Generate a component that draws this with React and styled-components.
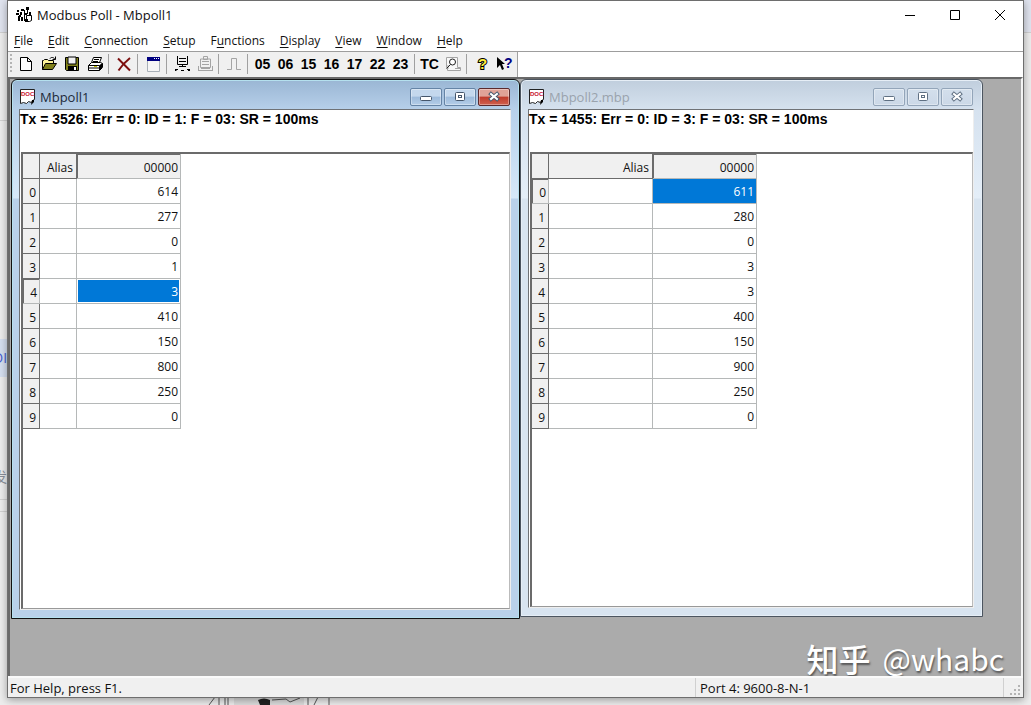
import React from 'react';
import styled, { createGlobalStyle } from 'styled-components';

const GlobalStyle = createGlobalStyle`
* { box-sizing: border-box; }
body {
    margin: 0;
    background: #ededed;
    font-family: "Open Sans", "Noto Sans", "Noto Sans CJK SC", sans-serif;
    font-size: 12px;
    color: #111;
}
button { font: inherit; color: inherit; padding: 0; }
`;

const Desktop = styled.div`
height: 100vh;
padding: 0 7px 7px;
position: relative;
overflow: hidden;
background: linear-gradient(#e0e4ef 0 32px, #d0d0d0 32px 33px, #ededed 33px);
`;

const Snippet = styled.span`
position: absolute;
left: ${p => p.$left}px;
top: ${p => p.$top}px;
padding: 8px 0;
font-size: 14px;
line-height: 22px;
white-space: nowrap;
color: ${p => p.$color};
background: ${p => p.$background || 'none'};
`;

const Rule = styled.span`
position: absolute;
left: 0;
width: 8px;
top: ${p => p.$top}px;
height: 1px;
background: #d2d2d2;
`;

const Sketch = styled.svg`
position: absolute;
left: 200px;
bottom: 0;
`;

const AppWindow = styled.main`
position: relative;
height: 100%;
display: flex;
flex-direction: column;
background: #fff;
border: 1px solid #6e6e6e;
box-shadow: 0 2px 8px rgba(0, 0, 0, 0.35);
`;

const TitleBar = styled.header`
display: flex;
align-items: center;
height: 29px;
padding: 0 1px 1px 8px;
flex: none;
`;

const TitleText = styled.h1`
margin: 0 auto 0 5px;
font-size: 13px;
font-weight: 400;
`;

const CaptionButton = styled.button`
width: 45px;
height: 28px;
border: 0;
background: none;
display: grid;
place-items: center;
`;

const MenuBar = styled.nav`
display: flex;
height: 21px;
flex: none;
align-items: center;
gap: 15px;
padding-left: 6px;
`;

const MenuButton = styled.button`
border: 0;
background: none;
white-space: nowrap;
u { text-underline-offset: 2px; }
`;

const ToolRow = styled.div`
height: 26px;
flex: none;
border-top: 1px solid #9d9d9d;
display: flex;
`;

const Toolbar = styled.div`
display: flex;
align-items: center;
background: #f0f0f0;
border-right: 1px solid #a0a0a0;
padding: 0 1px 1px 2px;
height: 25px;
`;

const Grip = styled.span`
width: 2px;
height: 20px;
background: repeating-linear-gradient(#b4b4b4 0 2px, #f0f0f0 2px 4px);
margin-right: 2px;
`;

const ToolButton = styled.button`
width: 23px;
height: 22px;
border: 0;
background: none;
display: grid;
place-items: center;
font-family: "Liberation Sans", Arial, sans-serif;
font-weight: 700;
font-size: 14px;
color: #000;
`;

const Separator = styled.span`
width: 1px;
height: 20px;
margin: 0 3px 0 2px;
background: #a0a0a0;
`;

const Workspace = styled.section`
position: relative;
flex: 1;
min-height: 0;
background: #ababab;
border: solid #696969;
border-width: 2px 0 0 2px;
border-right: 2px solid #f4f4f4;
overflow: hidden;
`;

const Child = styled.article`
position: absolute;
left: ${p => p.$left}px;
top: 0;
width: ${p => p.$width}px;
height: ${p => p.$height}px;
display: flex;
flex-direction: column;
padding: 0 8px 8px 7px;
border: 1px solid ${p => (p.$active ? '#111' : '#4c5560')};
border-radius: 6px 6px 0 0;
background: ${p => (p.$active
        ? 'linear-gradient(#9ab6d4, #b7d0ea 30px, #d6e8f8 118px, #b9d1ea 119px)'
        : 'linear-gradient(#c0cedd, #d6e2ef 30px, #e4eef8 118px, #d8e4f0 119px)')};
box-shadow: inset 0 0 0 1px ${p => (p.$active ? '#b5e0ee' : '#e6eef6')};
`;

const ChildTitle = styled.header`
display: flex;
align-items: center;
height: 29px;
flex: none;
gap: 2px;
padding: 5px 1px 0 0;
`;

const ChildName = styled.h2`
margin: 0 auto 0 3px;
font-size: 13px;
font-weight: 400;
color: ${p => (p.$active ? '#1d2a3a' : '#9aa3ad')};
`;

const FrameButton = styled.button`
width: 32px;
height: 18px;
display: grid;
place-items: center;
border: 1px solid ${p => (p.$danger ? '#5b2a2d' : p.$active ? '#6584a6' : '#93a5b9')};
border-radius: 2px;
background: ${p => (p.$danger
        ? 'linear-gradient(#e0a297 0 45%, #bf3a2b 50%, #d0614f)'
        : p.$active
            ? 'linear-gradient(#c4d8ed 0 45%, #9dbbdb 50%, #b4cde8)'
            : 'linear-gradient(#d3dfec, #cbd8e7)')};
box-shadow: inset 0 0 0 1px rgba(255, 255, 255, 0.35);
`;

const Client = styled.div`
flex: 1;
min-height: 0;
display: flex;
flex-direction: column;
background: #fff;
border: 1px solid #6f7276;
border-right-color: #eee;
border-bottom-color: #eee;
`;

const StatusLine = styled.p`
margin: 0;
height: 42px;
flex: none;
font: 700 14px/18px "Liberation Sans", Arial, sans-serif;
color: #000;
white-space: nowrap;
`;

const Sheet = styled.div`
flex: 1;
margin-left: 1px;
border: 2px solid #6b6b6b;
border-right: 1px solid #bbb;
border-bottom: 1px solid #999;
`;

const Grid = styled.table`
border-collapse: separate;
border-spacing: 0;
table-layout: fixed;
width: ${p => 17 + p.$alias + 104}px;
td {
    height: 25px;
    padding: 0 2px 0 0;
    text-align: right;
    border: solid #b5b8b8;
    border-width: 0 1px 1px 0;
}
`;

const AliasCol = styled.col`
width: ${p => p.$width}px;
`;

const IndexCol = styled.col`
width: 17px;
`;

const HeadCell = styled.th`
height: 25px;
padding: 2px 3px 0 0;
font-weight: 400;
text-align: right;
background: #f0f0f0;
border: solid #6b6b6b;
border-width: 0 1px 1px 0;
${p => p.$pressed && `
padding-right: 2px;
border-color: #b5b8b8;
box-shadow: inset 1px 1px #6b6b6b;
`}
`;

const ValueCell = styled.td`
background: ${p => (p.$selected ? '#0078d7' : '#fff')};
color: ${p => (p.$selected ? '#fff' : '#111')};
box-shadow: ${p => (p.$selected && p.$focused ? 'inset 0 0 0 1px #fff' : 'none')};
`;

const StatusBar = styled.footer`
display: flex;
align-items: stretch;
height: 21px;
flex: none;
line-height: 20px;
background: #f0f0f0;
border-top: 2px solid #fafafa;
padding-left: 2px;
font-size: 13px;
`;

const StatusText = styled.span`
flex: 1;
`;

const PortText = styled.span`
width: 309px;
padding-left: 4px;
border-left: 1px solid #d0d0d0;
border-right: 1px solid #d0d0d0;
`;

const SizeGrip = styled.svg`
width: 19px;
height: 19px;
`;

const Watermark = styled.div`
position: absolute;
right: 17px;
bottom: 1px;
display: flex;
gap: 12px;
font: 400 30px/34px "Noto Sans CJK SC", sans-serif;
color: #fff;
text-shadow: 1px 2px 2px rgba(0, 0, 0, 0.5);
`;

const Brand = styled.span`
font-size: 32px;
font-weight: 500;
`;

function Icon({ size = 16, children }) {
    return <svg width={size} height={size} viewBox={`0 0 ${size} ${size}`} fill="none" aria-hidden="true">{children}</svg>;
}

function AppIcon() {
    return <Icon>
        <path d="M1 3h2v2H1zM5 2h3v2H5zM0 6h3v2H0zM4 5h2v3H4zM3 8h2v2H3zM2 9h2v5H2zM8 3h1v11H8zM5 10h2v4H5z" fill="#000" />
        <path d="M10 0h3v3h-3zM11 3h1v4h-1zM13 5h2v3h-2z" fill="#000" />
        <path d="M10.500 8.500h5v5l-2 1h-3z" fill="#fff" stroke="#000" />
        <path d="M9 12h3v3H9zM9 6h2v2H9z" fill="#000" />
    </Icon>;
}

function DocIcon() {
    return <Icon>
        <path d="M1.500 0.500h14v10l-2 1-1 2-3-1-2 2-3-1-3 1z" fill="#fff" stroke="#222" />
        <path d="M13 11h2v2l-3 3z" fill="#000" />
        <text x="2" y="7" fontFamily="Liberation Sans" fontSize="6" fontWeight="700" fill="#c8102e">DOC</text>
    </Icon>;
}

const icons = {
    New: <path d="M2.500 1.500h7l4 4v9h-11zM9.500 1.500v4h4" fill="#fff" stroke="#000" />,
    Open: <>
        <path d="M1.500 13.500v-9h1l1-1h3l1 1h5v3" fill="#fff59a" stroke="#000" />
        <path d="M1.500 13.500l3-6h11l-4 6z" fill="#80801a" stroke="#000" />
        <path d="M9 2.500c1-1.500 3.500-1.500 5 .8M14.500 0.500v3h-3" stroke="#000" />
    </>,
    Save: <>
        <path d="M1.500 1.500h13v13h-12l-1-1z" fill="#80801a" stroke="#000" />
        <path d="M4 1h8v7H4z" fill="#f0f0f0" stroke="#000" />
        <path d="M4 10h9v5H4z" fill="#000" />
        <path d="M10 11h2v3h-2z" fill="#fff" />
    </>,
    Print: <>
        <path d="M4.500 6.500l2-5h8l-2 5M7 3.500h5M6 5.500h5" fill="#fff" stroke="#000" />
        <path d="M1.500 9.500l3-3h9l2 1v4l-3 3h-11z" fill="#fff" stroke="#000" />
        <path d="M1.500 9.500h11l3-2M12.500 9.500v5M2 12h10M13.500 9v4M14.500 8v4" stroke="#000" />
        <path d="M7 10h3v1H7z" fill="#c8c800" />
    </>,
    Delete: <path d="M2 2.500l12 12M14 2c-5 4-8 7-11.500 12.500" stroke="#7d0f0f" strokeWidth="2" />,
    Display: <>
        <path d="M2.500 2.500h12v13h-12z" fill="#f6f6f6" stroke="#a8b0b8" />
        <path d="M2 1h13v4H2z" fill="#000080" />
        <path d="M9 2h1v1H9zM11 2h1v1h-1zM13 2h1v1h-1z" fill="#fff" />
    </>,
    Connect: <path d="M3.500 0v8.500h10V0M5 2.500h7M5 5.500h7M8.500 9v2M5 10.500h7M1 13.500h3M2.500 14.500h-1.500M7 14.500h3M13 13.500h3M14 14.500h2" stroke="#000" />,
    Disconnect: <path d="M6.500 0.500h4v3h-4zM3.500 3v8.500h10V3zM5 5.500h7M5 8.500h7M1 14.500h15M1.500 10v4M15.500 10v4M4 12.500h9" stroke="#a4a4a4" />,
    Pulse: <path d="M1 13.500h4.500v-11h5v11h4.500" stroke="#a4a4a4" />,
    Traffic: <>
        <path d="M1.500 1.500h11v10h3v3h-13v-3h-1z" fill="#f8f8f8" stroke="#a4a4a4" />
        <path d="M10 12.500h5M3 9v4" stroke="#a4a4a4" />
        <circle cx="7.500" cy="6" r="3" fill="#fff" stroke="#222" />
        <path d="M5.500 8.500l-4 4" stroke="#222" />
    </>,
    About: <text x="4" y="13" fontFamily="Liberation Sans" fontSize="15" fontWeight="700" fill="#ffef3c" stroke="#000" strokeWidth="2" paintOrder="stroke">?</text>,
    Help: <>
        <path d="M0 1v11l3-3 2 5 2-1-2-5h3z" fill="#000" />
        <text x="7" y="12" fontFamily="Liberation Sans" fontSize="14" fontWeight="700" fill="#000080">?</text>
    </>,
};

function FrameGlyph({ kind, active }) {
    const stroke = active ? '#45566b' : '#5f7083';
    return <svg width="14" height="12" viewBox="0 0 14 12" fill="none" aria-hidden="true">
        {kind === 'Minimize' && <rect x="1.500" y="5.500" width="11" height="4" rx="1" fill="#fff" stroke={stroke} />}
        {kind === 'Maximize' && <>
            <rect x="2.500" y="1.500" width="9" height="8" rx="1" fill="#fff" stroke={stroke} />
            <rect x="5.500" y="4.500" width="3" height="2" stroke={stroke} />
        </>}
        {kind === 'Close' && <>
            <path d="M4 3l6 5M10 3l-6 5" stroke={stroke} strokeWidth="4" strokeLinecap="square" />
            <path d="M4 3l6 5M10 3l-6 5" stroke="#fff" strokeWidth="2" strokeLinecap="square" />
        </>}
    </svg>;
}

// [text before the access key, access key, rest]
const menus = [
    ['', 'F', 'ile'], ['', 'E', 'dit'], ['', 'C', 'onnection'], ['', 'S', 'etup'], ['F', 'u', 'nctions'],
    ['', 'D', 'isplay'], ['', 'V', 'iew'], ['', 'W', 'indow'], ['', 'H', 'elp'],
];

const toolGroups = [
    ['New', 'Open', 'Save', 'Print'],
    ['Delete'],
    ['Display'],
    ['Connect', 'Disconnect'],
    ['Pulse'],
    ['05', '06', '15', '16', '17', '22', '23'],
    ['TC', 'Traffic'],
    ['About', 'Help'],
];

const windows = [
    {
        name: 'Mbpoll1', active: true, left: 1, width: 509, height: 540, alias: 37, selected: 4,
        status: 'Tx = 3526: Err = 0: ID = 1: F = 03: SR = 100ms',
        values: [614, 277, 0, 1, 3, 410, 150, 800, 250, 0],
    },
    {
        name: 'Mbpoll2.mbp', active: false, left: 510, width: 463, height: 538, alias: 104, selected: 0,
        status: 'Tx = 1455: Err = 0: ID = 3: F = 03: SR = 100ms',
        values: [611, 280, 0, 3, 3, 400, 150, 900, 250, 0],
    },
];

function PollWindow({ name, active, left, width, height, alias, selected, status, values }) {
    return <Child $active={active} $left={left} $width={width} $height={height}>
        <ChildTitle>
            <DocIcon />
            <ChildName $active={active}>{name}</ChildName>
            {['Minimize', 'Maximize', 'Close'].map(kind => (
                <FrameButton key={kind} aria-label={kind} $active={active} $danger={active && kind === 'Close'}>
                    <FrameGlyph kind={kind} active={active} />
                </FrameButton>
            ))}
        </ChildTitle>
        <Client>
            <StatusLine>{status}</StatusLine>
            <Sheet>
                <Grid $alias={alias}>
                    <colgroup><IndexCol /><AliasCol $width={alias} /><col /></colgroup>
                    <thead>
                        <tr>
                            <HeadCell></HeadCell>
                            <HeadCell scope="col">Alias</HeadCell>
                            <HeadCell scope="col" $pressed>00000</HeadCell>
                        </tr>
                    </thead>
                    <tbody>
                        {values.map((value, i) => (
                            <tr key={i}>
                                <HeadCell scope="row" $pressed={i === selected}>{i}</HeadCell>
                                <td></td>
                                <ValueCell $selected={i === selected} $focused={active}>{value}</ValueCell>
                            </tr>
                        ))}
                    </tbody>
                </Grid>
            </Sheet>
        </Client>
    </Child>;
}

function App() {
    return <Desktop>
        <GlobalStyle />
        <Rule $top={120} />
        <Snippet $left={-7} $top={339} $color="#4a5fd0" $background="#d5dff0">DI</Snippet>
        <Snippet $left={-7} $top={458} $color="#8a8f98">发</Snippet>
        <Rule $top={499} />
        <Rule $top={511} />
        <Sketch width="140" height="8" viewBox="0 0 140 8" fill="none" aria-hidden="true">
            <path d="M34 0h70v8H34z" fill="#dcdcdc" />
            <path d="M15 0l-6 8M19 0v8M25 0v8M28 0v8M72 3l14-1 4 3 10-4M108 0v8M118 0l-4 8M129 0v8" stroke="#555" />
            <path d="M58 3q6-3 12 0v5H60z" fill="#222" />
        </Sketch>
        <AppWindow>
            <TitleBar>
                <AppIcon />
                <TitleText>Modbus Poll - Mbpoll1</TitleText>
                <CaptionButton aria-label="Minimize"><Icon size={12}><path d="M1 6.500h10" stroke="#000" /></Icon></CaptionButton>
                <CaptionButton aria-label="Maximize"><Icon size={12}><path d="M1.500 1.500h9v9h-9z" stroke="#000" /></Icon></CaptionButton>
                <CaptionButton aria-label="Close"><Icon size={12}><path d="M1 1l10 10M11 1L1 11" stroke="#000" /></Icon></CaptionButton>
            </TitleBar>
            <MenuBar>
                {menus.map(([before, key, rest]) => (
                    <MenuButton key={before + key + rest}>{before}<u>{key}</u>{rest}</MenuButton>
                ))}
            </MenuBar>
            <ToolRow>
                <Toolbar>
                    <Grip />
                    {toolGroups.map((group, i) => (
                        <React.Fragment key={group[0]}>
                            {i > 0 && <Separator />}
                            {group.map(tool => (
                                <ToolButton key={tool} aria-label={tool}>
                                    {icons[tool] ? <Icon>{icons[tool]}</Icon> : tool}
                                </ToolButton>
                            ))}
                        </React.Fragment>
                    ))}
                </Toolbar>
            </ToolRow>
            <Workspace>
                {windows.map(w => <PollWindow key={w.name} {...w} />)}
                <Watermark><Brand>知乎</Brand><span>@whabc</span></Watermark>
            </Workspace>
            <StatusBar>
                <StatusText>For Help, press F1.</StatusText>
                <PortText>Port 4: 9600-8-N-1</PortText>
                <SizeGrip viewBox="0 0 19 19" aria-hidden="true">
                    <path d="M14 7h2v2h-2zM10 11h2v2h-2zM14 11h2v2h-2zM6 15h2v2H6zM10 15h2v2h-2zM14 15h2v2h-2z" fill="#b4b4b4" />
                </SizeGrip>
            </StatusBar>
        </AppWindow>
    </Desktop>;
}

export default App;
